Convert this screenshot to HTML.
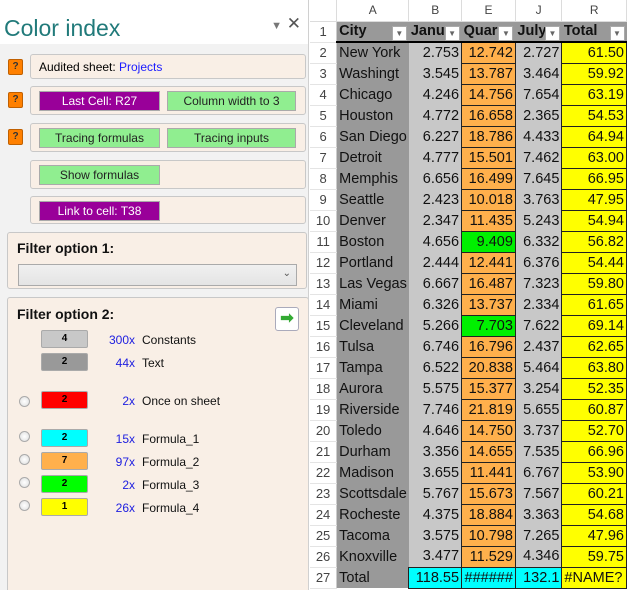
<!DOCTYPE html>
<html><head><meta charset="utf-8"><style>
*{box-sizing:border-box;margin:0;padding:0}
body{width:627px;height:590px;overflow:hidden;background:#fff;font-family:"Liberation Sans",sans-serif;position:relative}
#pane{position:absolute;left:0;top:0;width:309px;height:590px;background:#f2f2f2;border-right:1px solid #d0d0d0;overflow:hidden}
#title{position:absolute;left:0;top:0;width:309px;height:44px;background:#fff}
#title .t{position:absolute;left:4px;top:15px;font-size:23px;color:#217a7a}
#title .c{position:absolute;right:8px;top:14px;font-size:17px;color:#555}
.box{position:absolute;background:#f9efe6;border:1px solid #c8c8c8;border-radius:3px}
.q{position:absolute;left:8px;width:15px;height:16px;background:#ff8000;border:1px solid #c06000;border-radius:2px;font-size:10px;font-weight:bold;text-align:center;line-height:14px;color:#333}
.btn{position:absolute;height:20px;border:1px solid #aaa;font-size:12px;text-align:center;line-height:18px}
.p{background:#990099;color:#fff}
.g{background:#90ee90;color:#222}
.lbl{position:absolute;font-size:14px;font-weight:bold;color:#111}
.sw{position:absolute;left:41px;width:47px;height:18px;border:1px solid #aaa;border-radius:2px;font-size:10px;font-weight:bold;text-align:center;line-height:16px}
.n{position:absolute;width:60px;left:75px;text-align:right;font-size:12px;color:#2020e0}
.nm{position:absolute;left:142px;font-size:12px;color:#111}
.r{position:absolute;left:19px;width:11px;height:11px;border-radius:50%;border:1px solid #aaa;background:radial-gradient(#fff,#ddd)}
table{position:absolute;left:310px;top:0;border-collapse:collapse;table-layout:fixed;font-family:"Liberation Sans",sans-serif}
td{height:21px;font-size:14.5px;padding:0 2px;white-space:nowrap;overflow:hidden;color:#111}
tr.h td{height:21px;background:#fff;color:#444;font-size:12px;text-align:center;border-right:1px solid #dcdcdc;border-bottom:1px solid #dcdcdc}
td.rh{color:#444;font-size:13px;text-align:center;background:#fff;border-bottom:1px solid #e4e4e4;border-right:1px solid #ccc;padding:0}
td.a{background:#999}
td.b{background:#c8c8c8;text-align:right}
td.e{background:#ffb04c;text-align:right;border:1px solid #222}
td.j{background:#c8c8c8;text-align:right}
td.rr{background:#ff0;text-align:right;border:1px solid #222}
td.gr{background:#00f000;text-align:right;border:1px solid #222}
td.cy{background:#0ff;text-align:right;border:1px solid #222}
tr.f td.hd{background:#999;font-weight:bold;border-bottom:2px solid #000;position:relative}
.dd{display:inline-block;position:absolute;right:2px;top:4px;width:15px;height:15px;background:#fff;border:1px solid #aaa;font-size:8px;text-align:center;line-height:14px;color:#666}
</style></head><body>
<div id="pane">
<div id="title"><span class="t">Color index</span><span class="c"><span style="font-size:11px;color:#777">▼</span> ✕</span></div>
<div class="q" style="top:59px">?</div>
<div class="box" style="left:30px;top:54px;width:276px;height:25px"><span style="position:absolute;left:8px;top:5px;font-size:12px">Audited sheet:</span><span style="position:absolute;left:88px;top:5px;font-size:12px;color:#1a1aff">Projects</span></div>
<div class="q" style="top:92px">?</div>
<div class="box" style="left:30px;top:86px;width:276px;height:29px"><div class="btn p" style="left:8px;top:4px;width:121px">Last Cell: R27</div><div class="btn g" style="left:136px;top:4px;width:129px">Column width to 3</div></div>
<div class="q" style="top:129px">?</div>
<div class="box" style="left:30px;top:123px;width:276px;height:29px"><div class="btn g" style="left:8px;top:4px;width:121px">Tracing formulas</div><div class="btn g" style="left:136px;top:4px;width:129px">Tracing inputs</div></div>
<div class="box" style="left:30px;top:160px;width:276px;height:29px"><div class="btn g" style="left:8px;top:4px;width:121px">Show formulas</div></div>
<div class="box" style="left:30px;top:196px;width:276px;height:28px"><div class="btn p" style="left:8px;top:4px;width:121px">Link to cell: T38</div></div>
<div class="box" style="left:7px;top:232px;width:300px;height:57px"><div class="lbl" style="left:9px;top:7px">Filter option 1:</div><div style="position:absolute;left:10px;top:31px;width:279px;height:22px;background:linear-gradient(#f0f0f0,#e4e4e4);border:1px solid #aaa"><span style="position:absolute;right:5px;top:3px;font-size:10px;color:#555">⌄</span></div></div>
<div class="box" style="left:7px;top:297px;width:302px;height:310px">
<div class="lbl" style="left:9px;top:8px">Filter option 2:</div>
<div style="position:absolute;left:267px;top:9px;width:24px;height:24px;background:#fff;border:1px solid #aab;border-radius:3px;color:#3a3;font-size:16px;text-align:center;line-height:22px;font-weight:bold">➡</div>
</div>
<div class="sw" style="top:330px;background:#c8c8c8">4</div><div class="n" style="top:333px">300x</div><div class="nm" style="top:333px">Constants</div>
<div class="sw" style="top:353px;background:#999">2</div><div class="n" style="top:356px">44x</div><div class="nm" style="top:356px">Text</div>
<div class="r" style="top:396px"></div><div class="sw" style="top:391px;background:#f00">2</div><div class="n" style="top:394px">2x</div><div class="nm" style="top:394px">Once on sheet</div>
<div class="r" style="top:431px"></div><div class="sw" style="top:429px;background:#0ff">2</div><div class="n" style="top:432px">15x</div><div class="nm" style="top:432px">Formula_1</div>
<div class="r" style="top:454px"></div><div class="sw" style="top:452px;background:#ffb04c">7</div><div class="n" style="top:455px">97x</div><div class="nm" style="top:455px">Formula_2</div>
<div class="r" style="top:477px"></div><div class="sw" style="top:475px;background:#0f0">2</div><div class="n" style="top:478px">2x</div><div class="nm" style="top:478px">Formula_3</div>
<div class="r" style="top:500px"></div><div class="sw" style="top:498px;background:#ff0">1</div><div class="n" style="top:501px">26x</div><div class="nm" style="top:501px">Formula_4</div>
</div>
<table>
<colgroup><col style="width:30px"><col style="width:66px"><col style="width:54px"><col style="width:54px"><col style="width:48px"><col style="width:65px"></colgroup>
<tr class="h"><td></td><td>A</td><td>B</td><td>E</td><td>J</td><td>R</td></tr>
<tr class="f"><td class="rh">1</td><td class="hd">City<span class="dd">▼</span></td><td class="hd">Janua<span class="dd">▼</span></td><td class="hd">Quar<span class="dd">▼</span></td><td class="hd">July<span class="dd">▼</span></td><td class="hd">Total<span class="dd">▼</span></td></tr>
<tr><td class="rh">2</td><td class="a">New York</td><td class="b">2.753</td><td class="e">12.742</td><td class="j">2.727</td><td class="rr">61.50</td></tr>
<tr><td class="rh">3</td><td class="a">Washingt</td><td class="b">3.545</td><td class="e">13.787</td><td class="j">3.464</td><td class="rr">59.92</td></tr>
<tr><td class="rh">4</td><td class="a">Chicago</td><td class="b">4.246</td><td class="e">14.756</td><td class="j">7.654</td><td class="rr">63.19</td></tr>
<tr><td class="rh">5</td><td class="a">Houston</td><td class="b">4.772</td><td class="e">16.658</td><td class="j">2.365</td><td class="rr">54.53</td></tr>
<tr><td class="rh">6</td><td class="a">San Diego</td><td class="b">6.227</td><td class="e">18.786</td><td class="j">4.433</td><td class="rr">64.94</td></tr>
<tr><td class="rh">7</td><td class="a">Detroit</td><td class="b">4.777</td><td class="e">15.501</td><td class="j">7.462</td><td class="rr">63.00</td></tr>
<tr><td class="rh">8</td><td class="a">Memphis</td><td class="b">6.656</td><td class="e">16.499</td><td class="j">7.645</td><td class="rr">66.95</td></tr>
<tr><td class="rh">9</td><td class="a">Seattle</td><td class="b">2.423</td><td class="e">10.018</td><td class="j">3.763</td><td class="rr">47.95</td></tr>
<tr><td class="rh">10</td><td class="a">Denver</td><td class="b">2.347</td><td class="e">11.435</td><td class="j">5.243</td><td class="rr">54.94</td></tr>
<tr><td class="rh">11</td><td class="a">Boston</td><td class="b">4.656</td><td class="gr">9.409</td><td class="j">6.332</td><td class="rr">56.82</td></tr>
<tr><td class="rh">12</td><td class="a">Portland</td><td class="b">2.444</td><td class="e">12.441</td><td class="j">6.376</td><td class="rr">54.44</td></tr>
<tr><td class="rh">13</td><td class="a">Las Vegas</td><td class="b">6.667</td><td class="e">16.487</td><td class="j">7.323</td><td class="rr">59.80</td></tr>
<tr><td class="rh">14</td><td class="a">Miami</td><td class="b">6.326</td><td class="e">13.737</td><td class="j">2.334</td><td class="rr">61.65</td></tr>
<tr><td class="rh">15</td><td class="a">Cleveland</td><td class="b">5.266</td><td class="gr">7.703</td><td class="j">7.622</td><td class="rr">69.14</td></tr>
<tr><td class="rh">16</td><td class="a">Tulsa</td><td class="b">6.746</td><td class="e">16.796</td><td class="j">2.437</td><td class="rr">62.65</td></tr>
<tr><td class="rh">17</td><td class="a">Tampa</td><td class="b">6.522</td><td class="e">20.838</td><td class="j">5.464</td><td class="rr">63.80</td></tr>
<tr><td class="rh">18</td><td class="a">Aurora</td><td class="b">5.575</td><td class="e">15.377</td><td class="j">3.254</td><td class="rr">52.35</td></tr>
<tr><td class="rh">19</td><td class="a">Riverside</td><td class="b">7.746</td><td class="e">21.819</td><td class="j">5.655</td><td class="rr">60.87</td></tr>
<tr><td class="rh">20</td><td class="a">Toledo</td><td class="b">4.646</td><td class="e">14.750</td><td class="j">3.737</td><td class="rr">52.70</td></tr>
<tr><td class="rh">21</td><td class="a">Durham</td><td class="b">3.356</td><td class="e">14.655</td><td class="j">7.535</td><td class="rr">66.96</td></tr>
<tr><td class="rh">22</td><td class="a">Madison</td><td class="b">3.655</td><td class="e">11.441</td><td class="j">6.767</td><td class="rr">53.90</td></tr>
<tr><td class="rh">23</td><td class="a">Scottsdale</td><td class="b">5.767</td><td class="e">15.673</td><td class="j">7.567</td><td class="rr">60.21</td></tr>
<tr><td class="rh">24</td><td class="a">Rocheste</td><td class="b">4.375</td><td class="e">18.884</td><td class="j">3.363</td><td class="rr">54.68</td></tr>
<tr><td class="rh">25</td><td class="a">Tacoma</td><td class="b">3.575</td><td class="e">10.798</td><td class="j">7.265</td><td class="rr">47.96</td></tr>
<tr><td class="rh">26</td><td class="a">Knoxville</td><td class="b">3.477</td><td class="e">11.529</td><td class="j">4.346</td><td class="rr">59.75</td></tr>
<tr><td class="rh">27</td><td class="a">Total</td><td class="cy">118.55</td><td class="cy">######</td><td class="cy">132.1</td><td class="rr" style="text-align:left">#NAME?</td></tr>
</table>
</body></html>
